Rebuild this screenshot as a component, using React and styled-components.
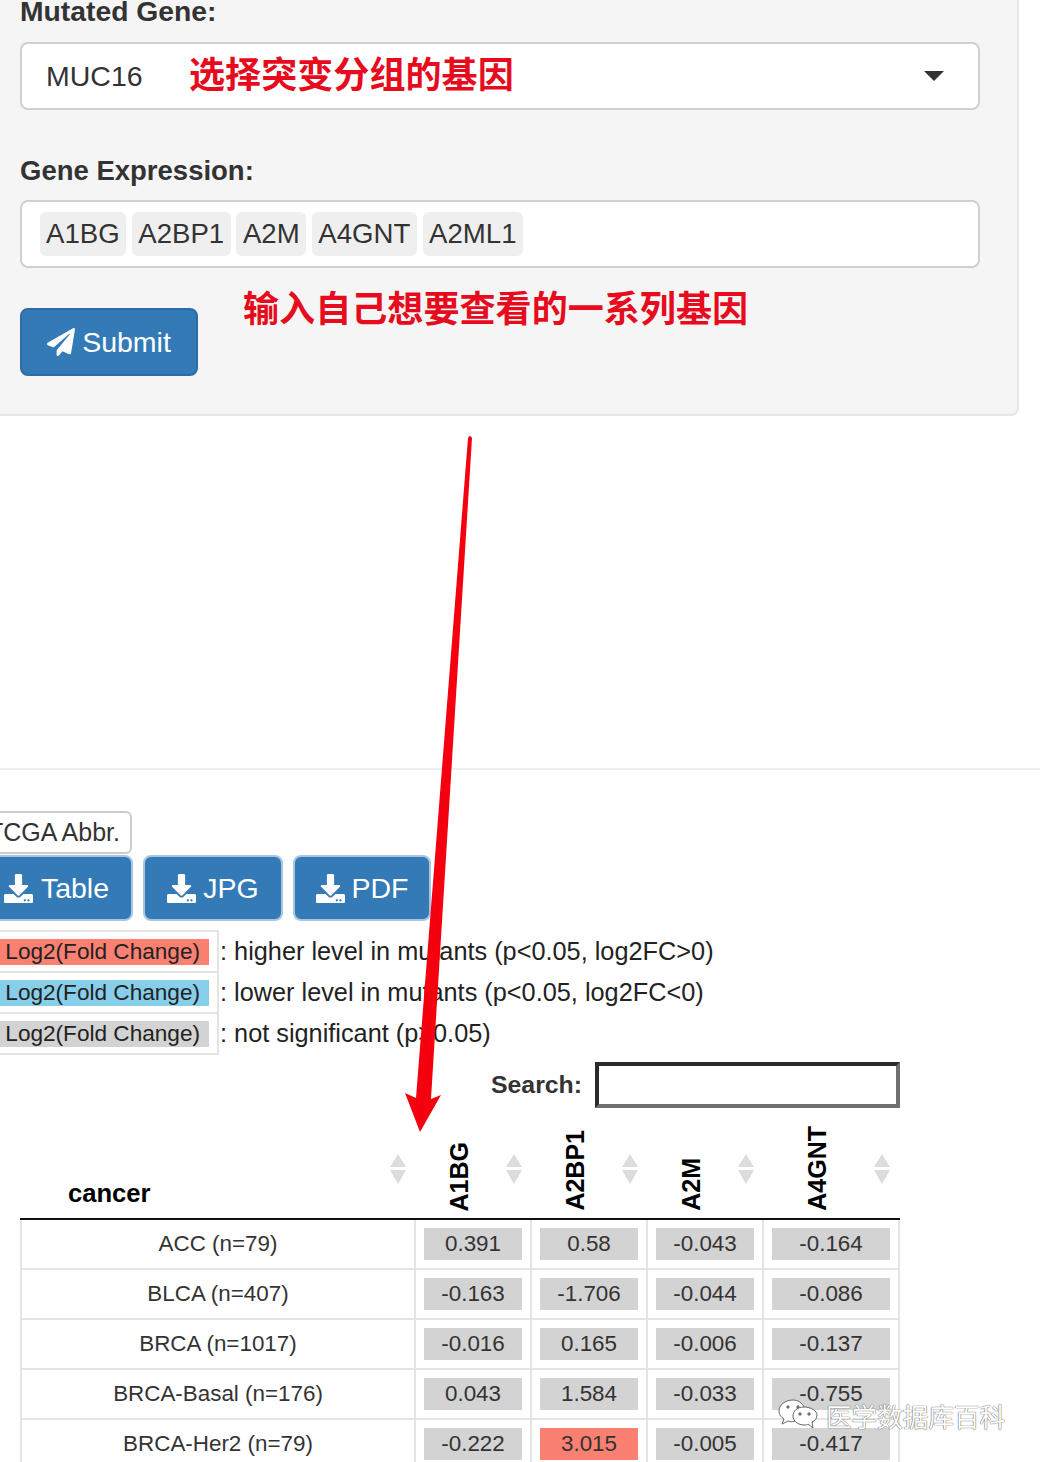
import React from "react";
import styled, { createGlobalStyle } from "styled-components";
import { FaPaperPlane, FaDownload } from "react-icons/fa";

const GlobalStyle = createGlobalStyle`
  html, body {
    margin: 0;
    padding: 0;
    background: #fff;
  }
  body {
    font-family: "Liberation Sans", Arial, "Noto Sans CJK SC", sans-serif;
    color: #333;
  }
  * { box-sizing: border-box; }
`;

const Page = styled.div`
  position: relative;
  width: 1040px;
  height: 1462px;
  overflow: hidden;
  background: #fff;
`;

const Well = styled.div`
  display: flow-root;
  width: 1020px;
  height: 416px;
  margin-left: -1px;
  padding: 0 0 0 21px;
  background: #f5f5f5;
  border: 2px solid #e6e6e6;
  border-top: 0;
  border-left: 0;
  border-radius: 0 0 8px 0;
`;

const FieldLabel = styled.div`
  font-size: ${(p) => p.$size || 27.5}px;
  font-weight: 700;
  line-height: 32px;
  height: 32px;
  margin-top: ${(p) => p.$top}px;
  margin-bottom: ${(p) => p.$bottom}px;
  color: #333;
`;

const Control = styled.div`
  display: flex;
  align-items: center;
  width: 960px;
  height: 68px;
  background: #fff;
  border: 2px solid #d0d0d0;
  border-radius: 8px;
  padding: ${(p) => p.$pad || "0 24px"};
  font-size: 28.5px;
  color: #333;
`;

const Note = styled.span`
  font-size: 36.1px;
  font-weight: 700;
  line-height: 40px;
  color: #e60c1d;
  white-space: nowrap;
`;

const SelectValue = styled.span`
  width: 143px;
`;

const Caret = styled.span`
  margin-left: auto;
  margin-right: 10px;
  width: 0;
  height: 0;
  border-left: 10px solid transparent;
  border-right: 10px solid transparent;
  border-top: 10px solid #333;
`;

const Tag = styled.span`
  height: 44px;
  line-height: 44px;
  padding: 0 6.5px;
  margin-right: 5.7px;
  background: #efefef;
  border-radius: 6px;
  font-size: 27.6px;
  color: #333;
`;

const SubmitRow = styled.div`
  display: flex;
  align-items: flex-start;
  margin-top: 40px;
`;

const BlueButton = styled.div`
  display: flex;
  align-items: center;
  justify-content: center;
  gap: ${(p) => p.$gap || 7}px;
  width: ${(p) => p.$w}px;
  height: ${(p) => p.$h || 68}px;
  padding-left: ${(p) => p.$shift || 0}px;
  background: #337ab7;
  border: 2px solid #2e6da4;
  border-radius: 8px;
  color: #fff;
  font-size: 28.5px;
`;

const SubmitNote = styled(Note)`
  margin: -18px 0 0 45px;
`;

const Divider = styled.div`
  height: 2px;
  margin-top: 352px;
  background: #eeeeee;
`;

const Results = styled.div`
  margin-left: -24px;
`;

const AbbrButton = styled.div`
  width: 156px;
  height: 43px;
  margin-top: 41px;
  line-height: 38px;
  text-align: right;
  padding-right: 10px;
  background: #fff;
  border: 2px solid #ccc;
  border-radius: 6px;
  font-size: 25px;
  color: #333;
  white-space: nowrap;
`;

const ButtonRow = styled.div`
  display: flex;
  gap: 10px;
  margin-top: 1px;
`;

const DownloadButton = styled(BlueButton)`
  border: 2px solid #a9c6e0;
`;

const LegendTable = styled.table`
  border-collapse: collapse;
  margin-top: 9px;
  font-size: 25.3px;
`;

const LegendKeyCell = styled.td`
  width: 242px;
  height: 41px;
  padding: 0 8px;
  border: 2px solid #e4e4e4;
  border-left: 0;
`;

const LegendKey = styled.div`
  height: 26px;
  line-height: 26px;
  text-align: right;
  padding-right: 9px;
  font-size: 22.6px;
  background: ${(p) => p.$color};
  color: #222;
`;

const LegendText = styled.td`
  padding-left: 1px;
  white-space: nowrap;
  color: #222;
`;

const SearchRow = styled.div`
  display: flex;
  justify-content: flex-end;
  align-items: center;
  gap: 13px;
  width: 900px;
  margin-top: 7px;
`;

const SearchLabel = styled.span`
  font-size: 24.8px;
  font-weight: 700;
  color: #333;
`;

const SearchBox = styled.div`
  width: 305px;
  height: 46px;
  background: #fff;
  border-style: solid;
  border-width: 4px;
  border-color: #2a2a2a #6f6f6f #6f6f6f #2a2a2a;
`;

const DataTable = styled.table`
  border-collapse: collapse;
  table-layout: fixed;
  width: 878px;
  margin: 11px 0 0 20px;
`;

const HeadCell = styled.th`
  position: relative;
  height: 100px;
  padding: 0 ${(p) => (p.$first ? 0 : 28)}px ${(p) => (p.$first ? 10 : 7)}px ${(p) => (p.$first ? 47 : 0)}px;
  vertical-align: bottom;
  text-align: left;
  border-bottom: 2px solid #111;
  font-size: ${(p) => (p.$first ? 25.6 : 25)}px;
  color: #000;
`;

const RotatedLabel = styled.div`
  writing-mode: vertical-rl;
  transform: rotate(180deg);
  margin: 0 auto;
  line-height: 24px;
`;

const SortIcon = styled.svg`
  position: absolute;
  right: 9px;
  top: 35px;
  width: 16px;
  height: 30px;
  fill: #dcdcdc;
`;

const NameCell = styled.td`
  height: 50px;
  text-align: center;
  font-size: 22.4px;
  color: #333;
  border: 2px solid #e4e4e4;
  border-top: 0;
`;

const ValueCell = styled.td`
  height: 50px;
  padding: 0 8px;
  border: 2px solid #e4e4e4;
  border-top: 0;
`;

const ValueChip = styled.div`
  height: 32px;
  line-height: 32px;
  text-align: center;
  font-size: 22.4px;
  color: #333;
  background: ${(p) => (p.$hot ? "#fa8072" : "#d3d3d3")};
`;

const ArrowOverlay = styled.svg`
  position: absolute;
  left: 395px;
  top: 430px;
  width: 85px;
  height: 710px;
`;

const Watermark = styled.div`
  position: absolute;
  left: 778px;
  top: 1397px;
  display: flex;
  align-items: center;
  gap: 8px;
  font-size: 25.6px;
  color: #fff;
  text-shadow: 0 0 1px #555, 0 0 1px #555;
  white-space: nowrap;
`;

const genes = ["A1BG", "A2BP1", "A2M", "A4GNT"];

const rows = [
  ["ACC (n=79)", "0.391", "0.58", "-0.043", "-0.164"],
  ["BLCA (n=407)", "-0.163", "-1.706", "-0.044", "-0.086"],
  ["BRCA (n=1017)", "-0.016", "0.165", "-0.006", "-0.137"],
  ["BRCA-Basal (n=176)", "0.043", "1.584", "-0.033", "-0.755"],
  ["BRCA-Her2 (n=79)", "-0.222", "3.015", "-0.005", "-0.417"],
];

const legend = [
  ["#fa8072", ": higher level in mutants (p<0.05, log2FC>0)"],
  ["#87ceeb", ": lower level in mutants (p<0.05, log2FC<0)"],
  ["#d3d3d3", ": not significant (p>0.05)"],
];

const Sort = () => (
  <SortIcon viewBox="0 0 16 30">
    <path d="M8 0 L16 13 H0 Z" />
    <path d="M0 16 H16 L8 30 Z" />
  </SortIcon>
);

const WeChat = () => (
  <svg width="40" height="34" viewBox="0 0 40 34" fill="none" stroke="#666" strokeWidth="1">
    <path d="M15 1 C7 1 1 6 1 12 C1 16 3 18 6 20 L4 25 L10 22 C12 23 15 23 17 22 L26 8 C24 4 20 1 15 1 Z" fill="#fff" />
    <path d="M26 8 C19 8 15 12 15 17 C15 22 20 26 26 26 C28 26 29 26 30 25 L35 29 L34 23 C37 22 39 19 39 16 C39 12 33 8 26 8 Z" fill="#fff" />
    <circle cx="10" cy="8" r="1.2" fill="#888" />
    <circle cx="20" cy="8" r="1.2" fill="#888" />
    <circle cx="22" cy="15" r="1.2" fill="#888" />
    <circle cx="31" cy="15" r="1.2" fill="#888" />
  </svg>
);

export default function App() {
  return (
    <Page>
      <GlobalStyle />
      <Well>
        <FieldLabel $top={-5} $bottom={15} $size={28.3}>Mutated Gene:</FieldLabel>
        <Control>
          <SelectValue>MUC16</SelectValue>
          <Note>选择突变分组的基因</Note>
          <Caret />
        </Control>
        <FieldLabel $top={45} $bottom={13}>Gene Expression:</FieldLabel>
        <Control $pad="0 0 0 17.5px">
          {["A1BG", "A2BP1", "A2M", "A4GNT", "A2ML1"].map((g) => (
            <Tag key={g}>{g}</Tag>
          ))}
        </Control>
        <SubmitRow>
          <BlueButton $w={178}>
            <FaPaperPlane size={28} />
            Submit
          </BlueButton>
          <SubmitNote>输入自己想要查看的一系列基因</SubmitNote>
        </SubmitRow>
      </Well>
      <Divider />
      <Results>
        <AbbrButton>TCGA Abbr.</AbbrButton>
        <ButtonRow>
          <DownloadButton $w={157} $h={66} $gap={8} $shift={4}>
            <FaDownload size={29} />
            Table
          </DownloadButton>
          <DownloadButton $w={140} $h={66}>
            <FaDownload size={29} />
            JPG
          </DownloadButton>
          <DownloadButton $w={138} $h={66}>
            <FaDownload size={29} />
            PDF
          </DownloadButton>
        </ButtonRow>
        <LegendTable>
          <tbody>
            {legend.map(([color, text]) => (
              <tr key={color}>
                <LegendKeyCell>
                  <LegendKey $color={color}>Log2(Fold Change)</LegendKey>
                </LegendKeyCell>
                <LegendText>{text}</LegendText>
              </tr>
            ))}
          </tbody>
        </LegendTable>
      </Results>
      <SearchRow>
        <SearchLabel>Search:</SearchLabel>
        <SearchBox />
      </SearchRow>
      <DataTable>
        <colgroup>
          <col style={{ width: 394 }} />
          <col style={{ width: 116 }} />
          <col style={{ width: 116 }} />
          <col style={{ width: 116 }} />
          <col style={{ width: 136 }} />
        </colgroup>
        <thead>
          <tr>
            <HeadCell $first>
              cancer
              <Sort />
            </HeadCell>
            {genes.map((g) => (
              <HeadCell key={g}>
                <RotatedLabel>{g}</RotatedLabel>
                <Sort />
              </HeadCell>
            ))}
          </tr>
        </thead>
        <tbody>
          {rows.map(([name, ...values]) => (
            <tr key={name}>
              <NameCell>{name}</NameCell>
              {values.map((v, i) => (
                <ValueCell key={i}>
                  <ValueChip $hot={v === "3.015"}>{v}</ValueChip>
                </ValueCell>
              ))}
            </tr>
          ))}
        </tbody>
      </DataTable>
      <ArrowOverlay viewBox="395 430 85 710">
        <path d="M468 438 Q470 434 472 438 L431 1099 L441 1095 L420 1132 L405 1093 L416 1098 Z" fill="#f4000f" />
      </ArrowOverlay>
      <Watermark>
        <WeChat />
        医学数据库百科
      </Watermark>
    </Page>
  );
}
